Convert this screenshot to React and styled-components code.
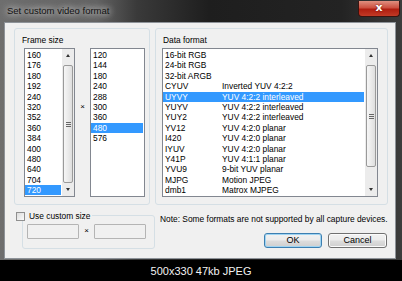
import React from 'react';
import styled, { createGlobalStyle } from 'styled-components';

// frame size / format data
const WIDTHS = ['160', '176', '180', '192', '240', '320', '352', '360', '384', '400', '480', '640', '704', '720'];
const HEIGHTS = ['120', '144', '180', '240', '288', '300', '360', '480', '576'];
const FORMATS = [
  ['16-bit RGB', ''],
  ['24-bit RGB', ''],
  ['32-bit ARGB', ''],
  ['CYUV', 'Inverted YUV 4:2:2'],
  ['UYVY', 'YUV 4:2:2 interleaved'],
  ['YUYV', 'YUV 4:2:2 interleaved'],
  ['YUY2', 'YUV 4:2:2 interleaved'],
  ['YV12', 'YUV 4:2:0 planar'],
  ['I420', 'YUV 4:2:0 planar'],
  ['IYUV', 'YUV 4:2:0 planar'],
  ['Y41P', 'YUV 4:1:1 planar'],
  ['YVU9', '9-bit YUV planar'],
  ['MJPG', 'Motion JPEG'],
  ['dmb1', 'Matrox MJPEG'],
];

const FS = '8.4px';

const GlobalStyle = createGlobalStyle`
  html, body { margin: 0; padding: 0; background: #000; }
  body {
    width: 402px;
    height: 281px;
    overflow: hidden;
    font-family: "Liberation Sans", Arial, sans-serif;
  }
`;

const Page = styled.div`
  width: 402px;
  height: 281px;
  display: flex;
  flex-direction: column;
  background: #000;
`;

const Window = styled.div`
  height: 260px;
  box-sizing: border-box;
  display: flex;
  flex-direction: column;
  padding: 0 6px 1px 4px;
  background: linear-gradient(90deg, #6e6e6e 0%, #636363 24%, #3a3a3a 34%, #1e1e1e 52%, #232323 85%, #3c3c3c 100%);
`;

const TitleBar = styled.div`
  height: 22px;
  display: flex;
  justify-content: space-between;
  align-items: flex-start;
  padding-left: 3px;
`;

const Title = styled.div`
  padding-top: 5px;
  font-size: 9.5px;
  line-height: 12px;
  color: #111;
  text-shadow: 0 0 6px rgba(255, 255, 255, 0.9), 0 0 10px rgba(255, 255, 255, 0.6);
`;

const CloseButton = styled.div`
  width: 42px;
  height: 16px;
  margin: 1px -4px 0 0;
  box-sizing: border-box;
  border: 1px solid #3a1410;
  border-top: none;
  border-radius: 0 0 4px 4px;
  background: linear-gradient(180deg, #e09080 0%, #cc5040 45%, #b01e10 55%, #c23a26 100%);
  color: #fff;
  font: bold 11px/14px "DejaVu Sans", sans-serif;
  text-align: center;
  text-shadow: 0 0 2px #5a0a00;
`;

const Content = styled.div`
  flex: 1;
  display: flex;
  flex-direction: column;
  background: #f0f0f0;
  border: 1px solid #8e9399;
`;

const TopRow = styled.div`
  display: flex;
  gap: 5px;
  padding: 5px 7px 0 9px;
`;

const Group = styled.div`
  width: ${(p) => p.$w}px;
  height: 177px;
  box-sizing: border-box;
  border: 1px solid #d5dfe5;
  border-radius: 3px;
  display: flex;
  flex-direction: column;
`;

const GroupLabel = styled.div`
  padding: 6px 0 0 7px;
  margin-bottom: 3px;
  font-size: ${FS};
  line-height: 10px;
  color: #000;
`;

const ListRow = styled.div`
  display: flex;
  align-items: flex-start;
  padding-left: ${(p) => p.$pad}px;
`;

const ListBox = styled.div`
  width: ${(p) => p.$w}px;
  height: 149px;
  box-sizing: border-box;
  border: 1px solid #828790;
  background: #fff;
  display: flex;
`;

const Items = styled.div`
  flex: 1;
  padding-top: 1px;
  margin-right: 1px;
`;

const Item = styled.div`
  height: 10.4px;
  display: flex;
  padding-left: 2px;
  font-size: ${FS};
  line-height: 10.4px;
  white-space: nowrap;
  color: ${(p) => (p.$sel ? '#fff' : '#000')};
  background: ${(p) => (p.$sel ? '#3399ff' : 'transparent')};
`;

const Code = styled.span`
  width: 57px;
  flex: none;
`;

const Times = styled.div`
  width: 15px;
  margin-top: ${(p) => p.$top}px;
  text-align: center;
  font-size: 8px;
  line-height: 10px;
`;

const ScrollBar = styled.div`
  width: 12px;
  display: flex;
  flex-direction: column;
  background: #ececec;
`;

const Arrow = styled.div`
  height: 13px;
  display: flex;
  align-items: center;
  justify-content: center;
  &::after {
    content: '';
    border-left: 2.5px solid transparent;
    border-right: 2.5px solid transparent;
    ${(p) => (p.$down ? 'border-top: 3px solid #333;' : 'border-bottom: 3px solid #333;')}
  }
`;

const Track = styled.div`
  flex: 1;
  padding-top: 3px;
`;

const Thumb = styled.div`
  height: ${(p) => p.$h}px;
  margin: 0 1px;
  box-sizing: border-box;
  border: 1px solid #9a9a9a;
  border-radius: 2px;
  background: linear-gradient(90deg, #f6f6f6 0%, #ebebeb 50%, #dedede 100%);
  display: flex;
  align-items: center;
  justify-content: center;
`;

const Grip = styled.div`
  width: 5px;
  height: 5px;
  background: repeating-linear-gradient(180deg, #666 0 1px, transparent 1px 2px);
`;

const BottomArea = styled.div`
  flex: 1;
  display: grid;
  grid-template-columns: 150px 1fr;
`;

const CustomCol = styled.div`
  padding: 10px 0 0 17px;
`;

const CustomBox = styled.div`
  position: relative;
  width: 133px;
  height: 34px;
  box-sizing: border-box;
  border: 1px solid #d5dfe5;
  border-radius: 3px;
  display: flex;
  align-items: flex-start;
  padding: 8px 0 0 4px;
`;

const CheckLabel = styled.label`
  position: absolute;
  left: -7px;
  top: -5px;
  height: 10px;
  display: flex;
  align-items: center;
  gap: 4px;
  padding-right: 2px;
  background: #f0f0f0;
  font-size: ${FS};
  line-height: 10px;
  color: #000;
`;

const CheckBox = styled.span`
  width: 9px;
  height: 9px;
  box-sizing: border-box;
  border: 1px solid #8f8f8f;
  background: linear-gradient(135deg, #dcdcdc, #fbfbfb);
`;

const TextInput = styled.div`
  width: 52px;
  height: 15px;
  box-sizing: border-box;
  border: 1px solid #b4b4b4;
  border-radius: 1px;
  background: #f0f0f0;
`;

const RightCol = styled.div`
  padding: 9px 6px 0 5px;
  display: flex;
  flex-direction: column;
`;

const Note = styled.div`
  font-size: ${FS};
  line-height: 10px;
  color: #000;
  white-space: nowrap;
`;

const ButtonRow = styled.div`
  margin-top: 9px;
  padding-right: 2px;
  display: flex;
  justify-content: flex-end;
  gap: 6px;
`;

const Button = styled.div`
  width: ${(p) => p.$w}px;
  height: 15px;
  box-sizing: border-box;
  border: 1px solid ${(p) => (p.$def ? '#3c7fb1' : '#707070')};
  border-radius: 3px;
  background: linear-gradient(180deg, #f2f2f2 0%, #ebebeb 48%, #dddddd 52%, #cfcfcf 100%);
  box-shadow: inset 0 0 0 1px ${(p) => (p.$def ? '#9fd4f2' : '#fbfbfb')};
  font-size: 9px;
  line-height: 13px;
  text-align: center;
  color: #000;
`;

const Caption = styled.div`
  flex: 1;
  display: flex;
  align-items: center;
  justify-content: center;
  font-size: 11px;
  color: #f2f2f2;
`;

function Scroll({ thumb }) {
  return (
    <ScrollBar>
      <Arrow />
      <Track>
        <Thumb $h={thumb}>
          <Grip />
        </Thumb>
      </Track>
      <Arrow $down />
    </ScrollBar>
  );
}

export default function App() {
  return (
    <Page>
      <GlobalStyle />
      <Window>
        <TitleBar>
          <Title>Set custom video format</Title>
          <CloseButton>x</CloseButton>
        </TitleBar>
        <Content>
          <TopRow>
            <Group $w={136}>
              <GroupLabel>Frame size</GroupLabel>
              <ListRow $pad={9}>
                <ListBox $w={51}>
                  <Items>
                    {WIDTHS.map((w) => (
                      <Item key={w} $sel={w === '720'}>{w}</Item>
                    ))}
                  </Items>
                  <Scroll thumb={118} />
                </ListBox>
                <Times $top={54}>×</Times>
                <ListBox $w={55}>
                  <Items>
                    {HEIGHTS.map((h) => (
                      <Item key={h} $sel={h === '480'}>{h}</Item>
                    ))}
                  </Items>
                </ListBox>
              </ListRow>
            </Group>
            <Group $w={233}>
              <GroupLabel>Data format</GroupLabel>
              <ListRow $pad={6}>
                <ListBox $w={216}>
                  <Items>
                    {FORMATS.map(([code, desc]) => (
                      <Item key={code} $sel={code === 'UYVY'}>
                        <Code>{code}</Code>
                        <span>{desc}</span>
                      </Item>
                    ))}
                  </Items>
                  <Scroll thumb={102} />
                </ListBox>
              </ListRow>
            </Group>
          </TopRow>
          <BottomArea>
            <CustomCol>
              <CustomBox>
                <CheckLabel>
                  <CheckBox />
                  Use custom size
                </CheckLabel>
                <TextInput />
                <Times $top={2}>×</Times>
                <TextInput />
              </CustomBox>
            </CustomCol>
            <RightCol>
              <Note>Note: Some formats are not supported by all capture devices.</Note>
              <ButtonRow>
                <Button $w={58} $def>OK</Button>
                <Button $w={59}>Cancel</Button>
              </ButtonRow>
            </RightCol>
          </BottomArea>
        </Content>
      </Window>
      <Caption>500x330 47kb JPEG</Caption>
    </Page>
  );
}
